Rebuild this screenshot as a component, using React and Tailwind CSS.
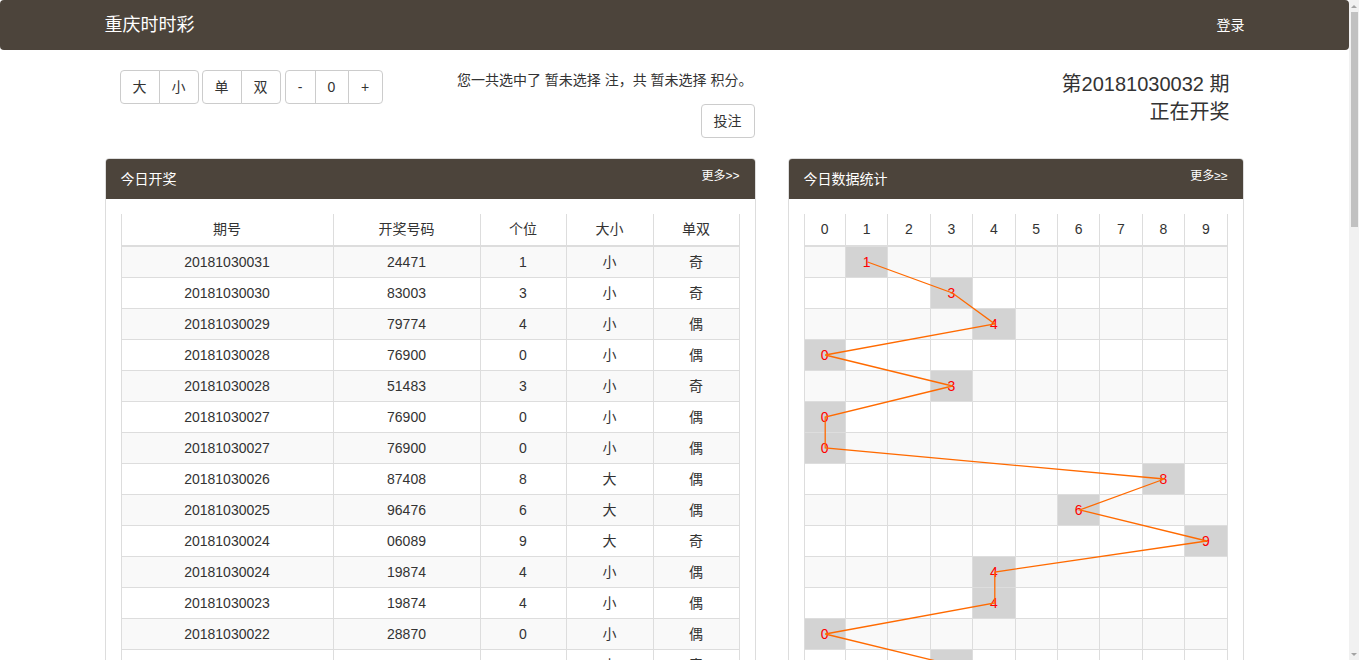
import React from "react";

const draws = [
    ["20181030031", "24471", 1, "小", "奇"],
    ["20181030030", "83003", 3, "小", "奇"],
    ["20181030029", "79774", 4, "小", "偶"],
    ["20181030028", "76900", 0, "小", "偶"],
    ["20181030028", "51483", 3, "小", "奇"],
    ["20181030027", "76900", 0, "小", "偶"],
    ["20181030027", "76900", 0, "小", "偶"],
    ["20181030026", "87408", 8, "大", "偶"],
    ["20181030025", "96476", 6, "大", "偶"],
    ["20181030024", "06089", 9, "大", "奇"],
    ["20181030024", "19874", 4, "小", "偶"],
    ["20181030023", "19874", 4, "小", "偶"],
    ["20181030022", "28870", 0, "小", "偶"],
    ["20181030021", "65813", 3, "小", "奇"],
    ["20181030020", "40257", 7, "大", "奇"],
    ["20181030019", "31582", 2, "小", "偶"],
];

const digits = [0, 1, 2, 3, 4, 5, 6, 7, 8, 9];

const Btn = ({ children, className = "" }) => (
    <button className={`h-[34px] border border-[#ccc] bg-white text-[14px] leading-[20px] text-[#333] ${className}`}>
        {children}
    </button>
);

const PanelHead = ({ title, more }) => (
    <div className="flex h-[40px] items-center justify-between rounded-t-[3px] bg-[#4c443b] px-[15px] text-white">
        <span className="text-[14px]">{title}</span>
        <span className="-mt-[6px] text-[12px]">{more}</span>
    </div>
);

const TrendChart = () => {
    const cw = 42.4;
    const pts = draws.map((r, i) => `${cw * (r[2] + 0.5)},${33 + 31 * i + 15}`).join(" ");
    return (
        <div className="relative w-[424px]">
            <div className="grid grid-cols-10">
                {digits.map((d) => (
                    <div
                        key={d}
                        className={`flex h-[33px] items-center justify-center border-r border-b-2 border-[#ddd] text-[14px] ${d === 0 ? "border-l" : ""}`}
                    >
                        {d}
                    </div>
                ))}
            </div>
            {draws.map((r, i) => (
                <div key={i} className={`grid grid-cols-10 ${i % 2 === 0 ? "bg-[#f9f9f9]" : "bg-white"}`}>
                    {digits.map((d) => (
                        <div
                            key={d}
                            className={`flex h-[31px] items-center justify-center border-r border-b border-[#ddd] text-[14px] ${d === 0 ? "border-l" : ""} ${d === r[2] ? "bg-[#d3d3d3] text-[#ff0000]" : ""}`}
                        >
                            {d === r[2] ? d : ""}
                        </div>
                    ))}
                </div>
            ))}
            <svg className="pointer-events-none absolute top-0 left-0" width="424" height={33 + 31 * draws.length}>
                <polyline points={pts} fill="none" stroke="#ff6a00" strokeWidth="1.3" />
            </svg>
        </div>
    );
};

const App = () => {
    return (
        <div className="flex h-[660px] overflow-hidden bg-white font-['Liberation_Sans','Noto_Sans_CJK_SC',sans-serif] text-[#333]">
            <div className="min-w-0 flex-1">
                <nav className="h-[50px] rounded-[4px] bg-[#4c443b]">
                    <div className="mx-auto flex h-full w-[1170px] items-center justify-between px-[15px] text-white">
                        <span className="text-[18px]">重庆时时彩</span>
                        <span className="text-[14px]">登录</span>
                    </div>
                </nav>

                <div className="mx-auto w-[1170px] px-[15px]">
                    <div className="mt-[20px] flex">
                        <div className="flex w-[652px]">
                            <div className="flex items-start gap-[3px] pl-[15px]">
                                <div className="flex">
                                    <Btn className="w-[40px] rounded-l-[4px]">大</Btn>
                                    <Btn className="-ml-px w-[40px] rounded-r-[4px]">小</Btn>
                                </div>
                                <div className="flex">
                                    <Btn className="w-[40px] rounded-l-[4px]">单</Btn>
                                    <Btn className="-ml-px w-[40px] rounded-r-[4px]">双</Btn>
                                </div>
                                <div className="ml-px flex">
                                    <Btn className="w-[31px] rounded-l-[4px]">-</Btn>
                                    <Btn className="-ml-px w-[34px]">0</Btn>
                                    <Btn className="-ml-px w-[35px] rounded-r-[4px]">+</Btn>
                                </div>
                            </div>
                            <div className="flex flex-1 flex-col items-end">
                                <p className="mr-[4px] text-[14px] leading-[20px]">
                                    您一共选中了 暂未选择 注，共 暂未选择 积分。
                                </p>
                                <Btn className="mt-[14px] mr-[2px] rounded-[4px] px-[12px]">投注</Btn>
                            </div>
                        </div>
                        <div className="flex-1 pr-[15px] text-right text-[20px] leading-[28px]">
                            <div>第20181030032 期</div>
                            <div>正在开奖</div>
                        </div>
                    </div>

                    <div className="mt-[20px] flex gap-[32px]">
                        <div className="w-[651px] rounded-[4px] border border-[#ddd]">
                            <PanelHead title="今日开奖" more="更多>>" />
                            <div className="p-[15px]">
                                <div className="grid grid-cols-[213px_147px_86px_87px_86px] text-[14px]">
                                    {["期号", "开奖号码", "个位", "大小", "单双"].map((h, j) => (
                                        <div
                                            key={h}
                                            className={`flex h-[33px] items-center justify-center border-r border-b-2 border-[#ddd] ${j === 0 ? "border-l" : ""}`}
                                        >
                                            {h}
                                        </div>
                                    ))}
                                </div>
                                {draws.map((r, i) => (
                                    <div
                                        key={i}
                                        className={`grid grid-cols-[213px_147px_86px_87px_86px] text-[14px] ${i % 2 === 0 ? "bg-[#f9f9f9]" : "bg-white"}`}
                                    >
                                        {r.map((c, j) => (
                                            <div
                                                key={j}
                                                className={`flex h-[31px] items-center justify-center border-r border-b border-[#ddd] ${j === 0 ? "border-l" : ""}`}
                                            >
                                                {c}
                                            </div>
                                        ))}
                                    </div>
                                ))}
                            </div>
                        </div>

                        <div className="w-[456px] rounded-[4px] border border-[#ddd]">
                            <PanelHead title="今日数据统计" more="更多≥≥" />
                            <div className="p-[15px]">
                                <TrendChart />
                            </div>
                        </div>
                    </div>
                </div>
            </div>

            <aside className="flex w-[10px] shrink-0 flex-col items-center bg-[#f1f1f1]">
                <div className="flex h-[12px] items-center justify-center">
                    <div className="h-0 w-0 border-x-[3px] border-b-[3px] border-x-transparent border-b-[#a3a3a3]" />
                </div>
                <div className="h-[215px] w-[7px] bg-[#c1c1c1]" />
                <div className="flex-1" />
                <div className="flex h-[12px] items-center justify-center">
                    <div className="h-0 w-0 border-x-[3px] border-t-[3px] border-x-transparent border-t-[#a3a3a3]" />
                </div>
            </aside>
        </div>
    );
};

export default App;
